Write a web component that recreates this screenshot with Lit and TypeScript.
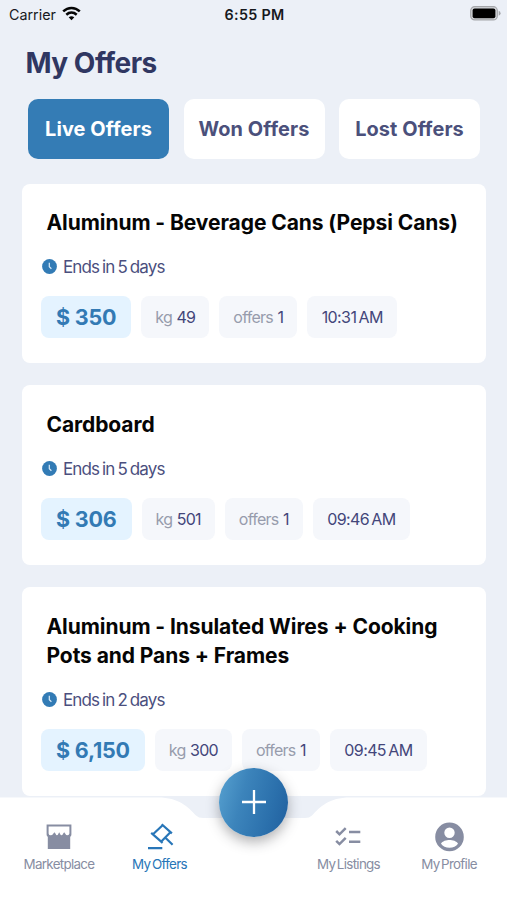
import { LitElement, html, css, svg } from "lit";
import { customElement, property } from "lit/decorators.js";
import { classMap } from "lit/directives/class-map.js";

interface Offer {
  title: string;
  ends: string;
  price: string;
  kg: string;
  offers: string;
  time: string;
}

const OFFERS: Offer[] = [
  { title: "Aluminum - Beverage Cans (Pepsi Cans)", ends: "Ends in 5 days", price: "$ 350", kg: "49", offers: "1", time: "10:31 AM" },
  { title: "Cardboard", ends: "Ends in 5 days", price: "$ 306", kg: "501", offers: "1", time: "09:46 AM" },
  { title: "Aluminum - Insulated Wires + Cooking Pots and Pans + Frames", ends: "Ends in 2 days", price: "$ 6,150", kg: "300", offers: "1", time: "09:45 AM" },
];

@customElement("status-bar")
class StatusBar extends LitElement {
  static styles = css`
    :host { display: grid; grid-template-columns: 1fr auto 1fr; align-items: center; height: 28px; padding: 0 6px 0 9px; color: #17191d; font-size: 14.3px; }
    .left { display: flex; align-items: center; gap: 6px; }
    .time { font-weight: 600; font-size: 14.3px; letter-spacing: 0.3px; margin-left: -1px; }
    .battery { justify-self: end; display: block; margin-top: -2px; }
    .wifi { display: block; margin-top: -2px; }
  `;
  render() {
    return html`
      <div class="left"><span>Carrier</span>
        <svg class="wifi" width="19" height="15" viewBox="0 0 19 15">
          <g fill="none" stroke="#050505" stroke-width="2.5">
            <path d="M1.2 5.4C6 .8 13 .8 17.8 5.4"/><path d="M4.3 8.7C7.4 5.9 11.6 5.9 14.7 8.7"/>
          </g>
          <path d="M9.5 14.2 6.7 11.3Q9.5 9 12.3 11.3Z" fill="#050505"/>
        </svg>
      </div>
      <span class="time">6:55 PM</span>
      <svg class="battery" width="31" height="15" viewBox="0 0 31 15">
        <rect x=".7" y=".7" width="26.6" height="13.2" rx="4" fill="#d5d7db" stroke="#a4a6aa" stroke-width="1.2"/>
        <rect x="2.6" y="2.6" width="22.8" height="9.6" rx="2" fill="#000"/>
        <path d="M28.7 4.8Q30.6 5.6 30.6 7.3T28.7 9.8Z" fill="#a4a6aa"/>
      </svg>`;
  }
}

@customElement("offer-card")
class OfferCard extends LitElement {
  @property({ attribute: false }) offer!: Offer;
  static styles = css`
    :host { display: block; flex: none; box-sizing: border-box; background: #fff; border-radius: 8px; padding: 24.5px 19px 25.2px; }
    .title { margin: 0 0 0 5.5px; font-size: 21px; line-height: 29.3px; font-weight: 700; color: #050505; letter-spacing: -0.08px; width: 420px; }
    .ends { display: flex; align-items: center; gap: 6px; height: 20px; margin: 19.5px 0 19.3px 1px; color: #4b4f7e; font-size: 17px; letter-spacing: -0.87px; word-spacing: -1px; }
    .ends svg { display: block; }
    .chips { display: flex; gap: 10px; }
    .chip { display: flex; align-items: center; box-sizing: border-box; height: 42px; padding: 0 14px; border-radius: 8px; background: #f5f7fb; color: #43467a; font-size: 16px; letter-spacing: -0.75px; white-space: nowrap; gap: 4.5px; }
    .time { letter-spacing: -0.6px; word-spacing: -1.7px; padding: 0 14.5px; }
    .unit { color: #979cac; }
    .price { background: #e4f3ff; color: #337ab4; font-size: 21.5px; font-weight: 700; letter-spacing: -0.2px; padding: 0 15px; }
  `;
  render() {
    const o = this.offer;
    return html`
      <h2 class="title">${o.title}</h2>
      <div class="ends">
        <svg width="15" height="15" viewBox="0 0 15 15"><circle cx="7.5" cy="7.5" r="7.4" fill="#327bb5"/><path d="M7.3 3.8V7.7L9.4 9.7" fill="none" stroke="#d9eaf8" stroke-width="1.2"/></svg>
        <span>${o.ends}</span>
      </div>
      <div class="chips">
        <div class="chip price">${o.price}</div>
        <div class="chip"><span class="unit">kg</span><span>${o.kg}</span></div>
        <div class="chip"><span class="unit">offers</span><span>${o.offers}</span></div>
        <div class="chip time">${o.time}</div>
      </div>`;
  }
}

const ICONS = {
  market: svg`<path fill="currentColor" fill-rule="evenodd" d="M2.6 3.5H27.4V13.5Q27.4 15.2 26.2 15.8V28H3.8V15.8Q2.6 15.2 2.6 13.5ZM4.6 5.4V12.4Q4.9 14.3 6.6 14.3 8.4 14.3 9.2 12.8L10.4 11.2 11.6 12.8Q12.1 14.3 13 14.3 14 14.2 14.5 12.6L15.2 11.3 16 12.8Q16.6 14.3 17.6 14.3 18.7 14.2 19.2 12.6L20.2 11.2 21.3 12.8Q22 14.3 23.4 14.3 25.2 14.1 25.4 12.4V5.4Z"/>`,
  gavel: svg`<g fill="none" stroke="currentColor" stroke-width="2.2"><path d="M17.7 3.3 27.9 12.4M7.2 11.9 18.6 21.8M18.6 4.2 9 13.3M26.4 11.2 17.3 20.4M21.2 16.5 28.6 23.8M4 27.2H18.3"/></g>`,
  list: svg`<g fill="none" stroke="currentColor" stroke-width="2.5"><path d="m3.2 10 3.3 3.3 6.2-6.2M3.2 19.8l3.3 3.3 6.2-6.2M16 10.9H27.3M16 20.7H27.3"/></g>`,
  profile: svg`<path fill="currentColor" fill-rule="evenodd" d="M15.5 1.6a14.3 14.3 0 1 0 0 28.6 14.3 14.3 0 1 0 0-28.6ZM15.5 6.5a5.2 5.2 0 1 1 0 10.4A5.2 5.2 0 1 1 15.5 6.5ZM15.5 26.7Q9.8 26.7 7 22.7C8.1 20.1 12.5 19 15.5 19S22.9 20.1 24 22.7Q21.2 26.7 15.5 26.7Z"/>`,
};

@customElement("bottom-nav")
class BottomNav extends LitElement {
  static styles = css`
    :host { display: block; position: relative; height: 103px; flex: none; }
    .shape { position: absolute; inset: 0; }
    .items { position: relative; display: grid; grid-template-columns: 117px 84px 105px 84px 117px; padding-top: 23.5px; }
    .item { display: flex; flex-direction: column; align-items: center; gap: 4px; color: #878da2; font-size: 13.4px; line-height: 18px; letter-spacing: -0.7px; word-spacing: -1.5px; white-space: nowrap; }
    .item span { margin-left: 1px; }
    .first { letter-spacing: -0.7px; }
    .active { color: #2876b8; }
    .item svg { overflow: visible; }
    .fab { position: absolute; left: 219px; top: -29.5px; width: 69px; height: 69px; border-radius: 50%; background: linear-gradient(105deg, #58a2d1 0%, #3c84bb 35%, #2b70ac 72%, #205f9e 100%); box-shadow: 0 5px 13px rgba(45, 45, 50, 0.38); display: grid; place-items: center; }
  `;
  render() {
    const item = (icon: unknown, label: string, active = false, first = false) => html`
      <div class=${classMap({ item: true, active, first })}>
        <svg width="30" height="30" viewBox="0 0 30 30">${icon}</svg><span>${label}</span>
      </div>`;
    return html`
      <svg class="shape" width="507" height="103" viewBox="0 0 507 103">
        <path fill="#fff" d="M0 .5H158C179 .5 188 10 196 18.5Q198.500 21 203 21H305Q309.500 21 312 18.500C320 10 329 .5 350 .5H507V103H0Z"/>
      </svg>
      <div class="items">
        ${item(ICONS.market, "Marketplace", false, true)}
        ${item(ICONS.gavel, "My Offers", true)}
        <span></span>
        ${item(ICONS.list, "My Listings")}
        ${item(ICONS.profile, "My Profile")}
      </div>
      <div class="fab"><svg width="26" height="26" viewBox="0 0 26 26"><path d="M13 1V25M1 13H25" stroke="#fff" stroke-width="2.3"/></svg></div>`;
  }
}

@customElement("app-root")
class AppRoot extends LitElement {
  static styles = css`
    :host { display: flex; flex-direction: column; width: 507px; height: 900px; overflow: hidden; background: #ecf0f7; font-family: Inter, "Liberation Sans", sans-serif; }
    .heading { margin: 18px 0 0 25.5px; font-size: 28px; line-height: 34px; font-weight: 700; color: #303762; letter-spacing: -0.5px; }
    .tabs { display: grid; grid-template-columns: repeat(3, 141px); gap: 14.5px; margin: 18.5px 0 0 28px; }
    .tab { display: grid; place-items: center; height: 60.5px; border-radius: 10px; background: #fff; color: #4b507b; font-size: 19.9px; font-weight: 700; letter-spacing: 0.1px; }
    .selected { background: #347cb5; color: #fff; }
    .list { display: flex; flex-direction: column; gap: 22px; flex: 1; min-height: 0; margin: 24.5px 21px 0 22px; }
  `;
  render() {
    return html`
      <status-bar></status-bar>
      <h1 class="heading">My Offers</h1>
      <div class="tabs">
        ${["Live Offers", "Won Offers", "Lost Offers"].map((t, i) => html`<div class=${classMap({ tab: true, selected: i === 0 })}>${t}</div>`)}
      </div>
      <div class="list">${OFFERS.map((o) => html`<offer-card .offer=${o}></offer-card>`)}</div>
      <bottom-nav></bottom-nav>`;
  }
}
